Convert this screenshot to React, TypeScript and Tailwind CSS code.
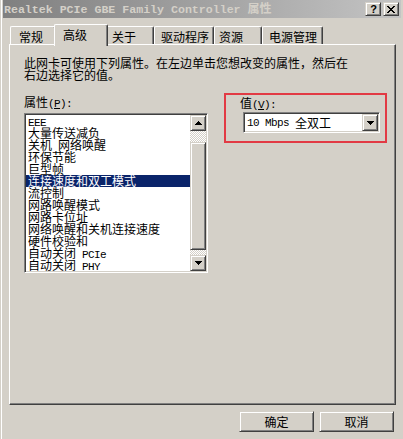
import React from "react";

const raised =
  "border border-t-[#d4d0c8] border-l-[#d4d0c8] border-r-[#404040] border-b-[#404040] shadow-[inset_1px_1px_#ffffff,inset_-1px_-1px_#808080] bg-[#d4d0c8]";
const sunken =
  "border border-t-[#808080] border-l-[#808080] border-r-white border-b-white shadow-[inset_1px_1px_#404040,inset_-1px_-1px_#d4d0c8]";

function M({ children, className = "" }: { children: React.ReactNode; className?: string }) {
  return (
    <span
      className={
        "[font-family:'Liberation_Mono',monospace] text-[11px] tracking-[-0.6px] leading-[0px] whitespace-pre " + className
      }
    >
      {children}
    </span>
  );
}

function Tri({ down }: { down?: boolean }) {
  const rows = down ? [7, 5, 3, 1] : [1, 3, 5, 7];
  return (
    <svg width="7" height="4" viewBox="0 0 7 4" shapeRendering="crispEdges">
      {rows.map((w, i) => (
        <rect key={i} x={(7 - w) / 2} y={i} width={w} height={1} fill="#000" />
      ))}
    </svg>
  );
}

function CloseGlyph() {
  const rows = [
    [0, 1, 6, 7],
    [1, 2, 5, 6],
    [2, 3, 4, 5],
    [3, 4],
    [2, 3, 4, 5],
    [1, 2, 5, 6],
    [0, 1, 6, 7],
  ];
  return (
    <svg width="8" height="7" viewBox="0 0 8 7" shapeRendering="crispEdges">
      {rows.flatMap((r, y) => r.map((x) => <rect key={y + "-" + x} x={x} y={y} width={1} height={1} fill="#000" />))}
    </svg>
  );
}

const tabs = [
  { label: "常规", w: "w-[46px]", pl: "pl-[8px]", sel: false },
  { label: "高级", w: "w-[54px]", pl: "pl-[8px]", sel: true },
  { label: "关于", w: "w-[48px]", pl: "pl-[5px]", sel: false },
  { label: "驱动程序", w: "w-[60px]", pl: "pl-[6px]", sel: false },
  { label: "资源", w: "w-[48px]", pl: "pl-[4px]", sel: false },
  { label: "电源管理", w: "w-[61px]", pl: "pl-[6px]", sel: false },
];

const items: React.ReactNode[] = [
  <M>EEE</M>,
  "大量传送减负",
  <>
    关机<M> </M>网络唤醒
  </>,
  "环保节能",
  "巨型帧",
  "连接速度和双工模式",
  "流控制",
  "网路唤醒模式",
  "网路卡位址",
  "网络唤醒和关机连接速度",
  "硬件校验和",
  <>
    自动关闭<M> PCIe</M>
  </>,
  <>
    自动关闭<M> PHY</M>
  </>,
];

const checker =
  "[background-image:repeating-conic-gradient(#ffffff_0_25%,#d4d0c8_0_50%)] [background-size:2px_2px]";

export default function App() {
  return (
    <div className="w-[403px] h-[439px] bg-[#d4d0c8] pl-[1px] pr-[2px] overflow-hidden [font-family:'Noto_Sans_CJK_SC',sans-serif] text-[12px] leading-[12px] text-black">
      <div className="h-full border-l border-white pl-[1px] flex flex-col">
        {/* Title bar */}
        <div className="h-[18px] flex items-center bg-gradient-to-r from-[#808080] to-[#c4c4c4] pl-[1px] pr-[2px]">
          <div className="flex-1 text-[#d4d0c8] font-bold whitespace-pre flex items-baseline">
            <span className="[font-family:'Liberation_Mono',monospace] text-[11.6px] whitespace-pre">
              {"Realtek PCIe GBE Family Controller "}
            </span>
            <span>属性</span>
          </div>
          <div className="flex gap-[2px]">
            <div className={raised + " w-[16px] h-[14px] flex items-center justify-center"}>
              <span className="[font-family:'Liberation_Sans',sans-serif] font-bold text-[11px] leading-[11px] pl-[1px]">?</span>
            </div>
            <div className={raised + " w-[16px] h-[14px] flex items-center justify-center"}>
              <CloseGlyph />
            </div>
          </div>
        </div>

        {/* Tabs */}
        <div className="mt-[6px] h-[20px] flex items-end ml-[7px]">
          {tabs.map((t) =>
            t.sel ? (
              <div
                key={t.label}
                className={
                  t.w +
                  " " +
                  t.pl +
                  " relative z-10 -mx-[2px] -mb-[2px] h-[22px] bg-[#d4d0c8] border-l border-t border-white border-r border-r-[#404040] shadow-[inset_-1px_0_#808080] rounded-t-[2px] pt-[4px] whitespace-nowrap"
                }
              >
                {t.label}
              </div>
            ) : (
              <div
                key={t.label}
                className={
                  t.w +
                  " " +
                  t.pl +
                  " h-[18px] bg-[#d4d0c8] border-l border-t border-white border-r border-r-[#404040] shadow-[inset_-1px_0_#808080] rounded-t-[2px] pt-[4px] whitespace-nowrap"
                }
              >
                {t.label}
              </div>
            )
          )}
        </div>

        {/* Panel */}
        <div className="ml-[6px] w-[387px] h-[361px] border-t border-l border-white border-r border-r-[#404040] border-b border-b-[#404040] shadow-[inset_-1px_-1px_#808080] pl-[14px] pt-[12px]">
          <div className="h-[12px] whitespace-nowrap">此网卡可使用下列属性。在左边单击您想改变的属性，然后在</div>
          <div className="h-[12px] whitespace-nowrap">右边选择它的值。</div>

          <div className="mt-[12px] flex">
            {/* left column */}
            <div className="w-[184px] pt-[3px]">
              <div className="h-[12px] whitespace-nowrap">
                属性
                <M>
                  (<span className="underline underline-offset-[1px]">P</span>):
                </M>
              </div>
              <div className={sunken + " mt-[5px] h-[160px] bg-white p-[1px] flex"}>
                <div className="flex-1 flex flex-col">
                  {items.map((it, i) => (
                    <div
                      key={i}
                      className={
                        i === 5
                          ? "h-[12px] shrink-0 leading-[12px] pl-[2px] whitespace-nowrap bg-[#0a246a] text-white"
                          : "h-[12px] shrink-0 leading-[12px] pl-[2px] whitespace-nowrap"
                      }
                    >
                      {it}
                    </div>
                  ))}
                </div>
                <div className="w-[16px] flex flex-col">
                  <div className={raised + " h-[16px] flex items-center justify-center"}>
                    <Tri />
                  </div>
                  <div className={checker + " h-[11px]"} />
                  <div className={raised + " h-[108px]"} />
                  <div className={checker + " flex-1"} />
                  <div className={raised + " h-[16px] flex items-center justify-center"}>
                    <Tri down />
                  </div>
                </div>
              </div>
            </div>

            {/* right column: value group */}
            <div className="ml-[16px] w-[163px] h-[50px] border-2 border-[#e23a44] pt-[2px]">
              <div className="h-[12px] pl-[14px] whitespace-nowrap">
                值
                <M>
                  (<span className="underline underline-offset-[1px]">V</span>):
                </M>
              </div>
              <div className={sunken + " mt-[3px] ml-[17px] w-[137px] h-[21px] bg-white p-[1px] flex"}>
                <div className="flex-1 flex items-center pl-[2px] whitespace-pre">
                  <M>{"10 Mbps "}</M>全双工
                </div>
                <div className={raised + " w-[16px] h-[17px] flex items-center justify-center"}>
                  <Tri down />
                </div>
              </div>
            </div>
          </div>
        </div>

        {/* Buttons */}
        <div className="mt-[6px] flex justify-end gap-[5px] pr-[7px]">
          <div className={raised + " w-[75px] h-[21px] flex items-center justify-center"}>确定</div>
          <div className={raised + " w-[75px] h-[21px] flex items-center justify-center"}>取消</div>
        </div>
      </div>
    </div>
  );
}
